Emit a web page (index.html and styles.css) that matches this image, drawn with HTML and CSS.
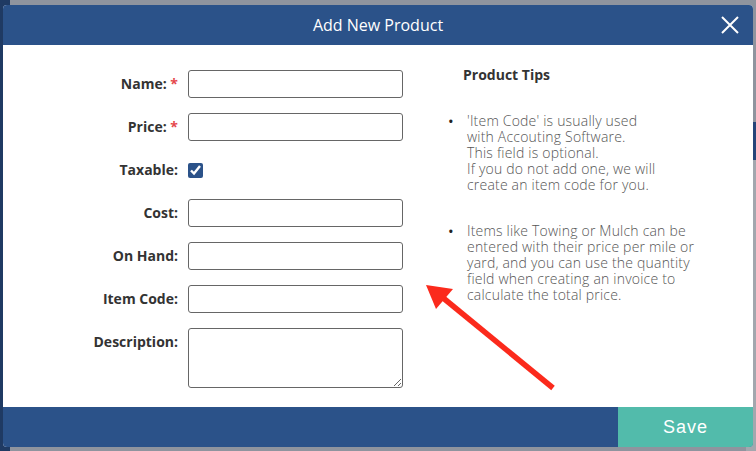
FILE: index.html
```html
<!DOCTYPE html>
<html lang="en">
<head>
    <meta charset="UTF-8">
    <meta name="viewport" content="width=device-width, initial-scale=1.0">
    <title>Add New Product</title>
    <link rel="stylesheet" href="styles.css">
</head>
<body>
    <div class="modal">
        <div class="modal-header">
            <span></span>
            <h1>Add New Product</h1>
            <button class="close" aria-label="Close">
                <svg width="18" height="18" viewBox="0 0 18 18">
                    <path d="M1 1 L17 17 M17 1 L1 17" stroke="#fff" stroke-width="2" fill="none"/>
                </svg>
            </button>
        </div>

        <div class="modal-body">
            <form class="product-form">
                <label for="name">Name: <span class="req">*</span></label>
                <input type="text" id="name">

                <label for="price">Price: <span class="req">*</span></label>
                <input type="text" id="price">

                <label for="taxable">Taxable:</label>
                <div class="check-cell"><input type="checkbox" id="taxable" checked></div>

                <label for="cost">Cost:</label>
                <input type="text" id="cost">

                <label for="onHand">On Hand:</label>
                <input type="text" id="onHand">

                <label for="itemCode">Item Code:</label>
                <input type="text" id="itemCode">

                <label for="description">Description:</label>
                <textarea id="description"></textarea>
            </form>

            <div class="tips">
                <h2>Product Tips</h2>
                <ul>
                    <li>'Item Code' is usually used<br>with Accouting Software.<br>This field is optional.<br>If you do not add one, we will<br>create an item code for you.</li>
                    <li>Items like Towing or Mulch can be<br>entered with their price per mile or<br>yard, and you can use the quantity<br>field when creating an invoice to<br>calculate the total price.</li>
                </ul>
            </div>
        </div>

        <div class="modal-footer">
            <button class="save">Save</button>
        </div>
    </div>

    <!-- fleche rouge par dessus le modal -->
    <svg class="arrow" width="756" height="451" viewBox="0 0 756 451">
        <line x1="553" y1="388" x2="442" y2="297" stroke="#fb2a1c" stroke-width="5.5"/>
        <polygon points="426,285 453,289 436,309" fill="#fb2a1c"/>
    </svg>
</body>
</html>
```

FILE: styles.css
```css
body {
    margin: 0;
    height: 451px;
    position: relative;
    overflow: hidden;
    font-family: "Open Sans", "DejaVu Sans", sans-serif;
    background:
        linear-gradient(#1f3a63, #1f3a63) left top / 10px 100% no-repeat,
        linear-gradient(transparent 122px, #26457a 122px, #26457a 160px, #a3a7ae 160px) right top / 10px 100% no-repeat,
        #8f949e;
}
.modal {
    width: 750px;
    margin: 5px 0 0 3px;
    background-color: #fff;
    border-radius: 4px;
    overflow: hidden;
}
.modal-header {
    height: 40px;
    background-color: #2b5289;
    display: grid;
    grid-template-columns: 46px 1fr 46px;
    align-items: center;
}
.modal-header h1 {
    margin: 0;
    text-align: center;
    color: #fff;
    font-size: 16px;
    font-weight: 400;
}
.close {
    background: none;
    border: none;
    padding: 0;
    height: 40px;
    display: flex;
    align-items: center;
    justify-content: center;
    cursor: pointer;
}
.modal-body {
    height: 362px;
    display: flex;
    box-sizing: border-box;
    padding-top: 25px;
}
.product-form {
    display: grid;
    grid-template-columns: 175px 215px;
    column-gap: 10px;
    row-gap: 15px;
    align-content: start;
}
.product-form label {
    text-align: right;
    font-size: 14px;
    font-weight: 700;
    color: #333;
    line-height: 28px;
}
.req {
    color: #e5484d;
}
.product-form input[type="text"],
.product-form textarea {
    box-sizing: border-box;
    width: 215px;
    height: 28px;
    border: 1px solid #666;
    border-radius: 3px;
    margin: 0;
    font-family: inherit;
}
.product-form textarea {
    height: 60px;
}
.check-cell {
    height: 28px;
    display: flex;
    align-items: center;
}
.check-cell input {
    width: 15px;
    height: 15px;
    margin: 0;
    accent-color: #2b5289;
}
.tips {
    margin-left: 45px;
    color: #555;
    font-size: 14px;
    line-height: 16px;
}
.tips h2 {
    margin: -3px 0 0 15px;
    font-size: 14px;
    font-weight: 700;
    color: #333;
    line-height: 16px;
}
.tips ul {
    list-style: none;
    margin: 30px 0 0 0;
    padding: 0;
    font-weight: 300;
    letter-spacing: 0.2px;
}
.tips li {
    display: grid;
    grid-template-columns: 19px 1fr;
    margin-bottom: 30px;
}
.tips li::before {
    content: "\2022";
    font-size: 15px;
    font-weight: 400;
    color: #222;
}
.modal-footer {
    height: 40px;
    background-color: #2b5289;
    display: flex;
    justify-content: flex-end;
}
.save {
    width: 135px;
    border: none;
    background-color: #52bbab;
    color: #fff;
    font-family: "Liberation Sans", Arial, sans-serif;
    font-size: 18px;
    letter-spacing: 1px;
    cursor: pointer;
}
.arrow {
    position: absolute;
    top: 0;
    left: 0;
    pointer-events: none;
}
```
